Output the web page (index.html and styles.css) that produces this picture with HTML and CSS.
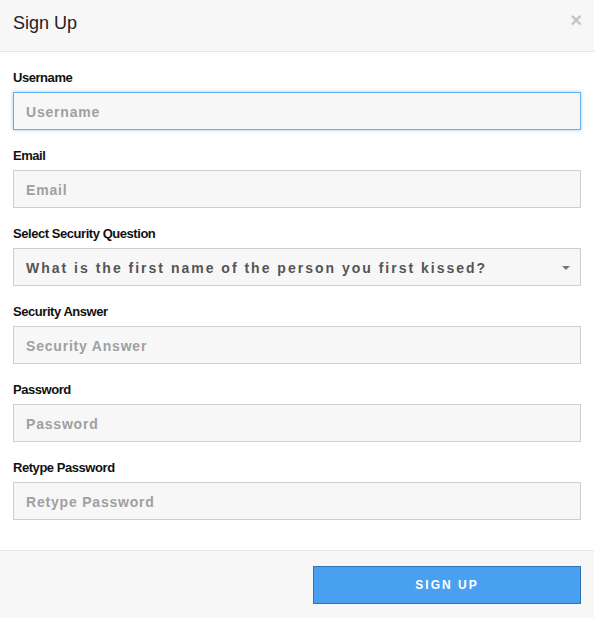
FILE: index.html
```html
<!DOCTYPE html>
<html>
<head>
<meta charset="utf-8">
<link rel="stylesheet" href="styles.css">
</head>
<body>
<div class="modal">
  <div class="modal-header">
    <h4 class="modal-title">Sign Up</h4>
    <span class="close">&times;</span>
  </div>
  <div class="modal-body">
    <div class="group">
      <label class="label">Username</label>
      <input class="field focused" placeholder="Username">
    </div>
    <div class="group">
      <label class="label">Email</label>
      <input class="field" placeholder="Email">
    </div>
    <div class="group">
      <label class="label">Select Security Question</label>
      <div class="field select">
        <span class="select-text">What is the first name of the person you first kissed?</span>
        <span class="caret"></span>
      </div>
    </div>
    <div class="group">
      <label class="label">Security Answer</label>
      <input class="field" placeholder="Security Answer">
    </div>
    <div class="group">
      <label class="label">Password</label>
      <input class="field" placeholder="Password">
    </div>
    <div class="group">
      <label class="label">Retype Password</label>
      <input class="field" placeholder="Retype Password">
    </div>
  </div>
  <div class="modal-footer">
    <button class="btn">SIGN UP</button>
  </div>
</div>
</body>
</html>
```
FILE: styles.css
```css
* { box-sizing: border-box; }
html, body { margin: 0; padding: 0; background: #fff; }
body { font-family: "Liberation Sans", Arial, sans-serif; color: #333; }
.modal { width: 594px; }
.modal-header {
  background: #f7f7f7;
  border-bottom: 1px solid #e5e5e5;
  height: 52px;
  padding: 13px 13px 0 13px;
  display: flex;
  justify-content: space-between;
  align-items: flex-start;
}
.modal-title {
  margin: 0;
  font-size: 18px;
  font-weight: normal;
  line-height: 21px;
  color: #222;
}
.close {
  font-size: 20px;
  font-weight: bold;
  line-height: 16px;
  color: #c4c4c4;
  margin-right: -1px;
  margin-top: -1px;
}
.modal-body { padding: 15px 13px 15px 13px; }
.group { margin-bottom: 15px; }
.label {
  display: block;
  font-size: 13px;
  font-weight: bold;
  line-height: 21px;
  letter-spacing: -0.45px;
  color: #111;
  margin-bottom: 4px;
}
.field {
  display: block;
  width: 568px;
  height: 38px;
  margin: 0;
  padding: 2px 12px 0 12px;
  background: #f7f7f7;
  border: 1px solid #cfcfcf;
  border-radius: 0;
  font-family: "Liberation Sans", Arial, sans-serif;
  font-size: 14px;
  font-weight: bold;
  letter-spacing: 0.8px;
  color: #555;
  outline: none;
}
.field::placeholder { color: #a0a0a0; opacity: 1; }
.field.focused {
  border-color: #66afe9;
  box-shadow: 0 0 4px rgba(102, 175, 233, 0.6);
}
.select {
  display: flex;
  align-items: center;
  justify-content: space-between;
  padding-right: 10px;
}
.select-text { letter-spacing: 2px; color: #555; }
.caret {
  width: 0; height: 0;
  border-left: 4px solid transparent;
  border-right: 4px solid transparent;
  border-top: 4px solid #777;
}
.modal-footer {
  background: #f7f7f7;
  border-top: 1px solid #e5e5e5;
  padding: 15px 13px 15px 13px;
  display: flex;
  justify-content: flex-end;
}
.btn {
  width: 268px;
  height: 38px;
  background: #4aa0f0;
  border: 1px solid #2f73bb;
  color: #fff;
  font-family: "Liberation Sans", Arial, sans-serif;
  font-size: 12px;
  font-weight: bold;
  letter-spacing: 2px;
  padding: 0;
}
```
